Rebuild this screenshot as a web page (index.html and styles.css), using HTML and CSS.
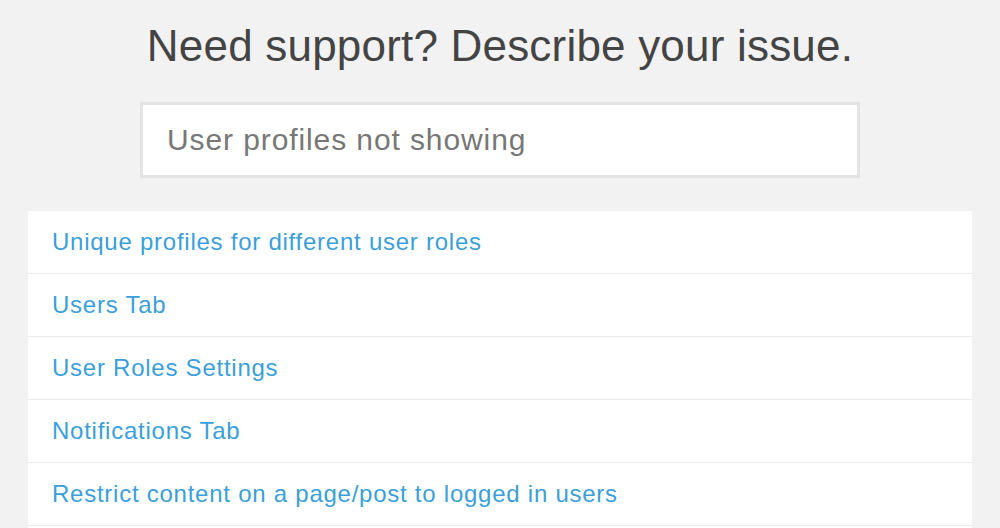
FILE: index.html
```html
<!DOCTYPE html>
<html>
<head>
<meta charset="utf-8">
<link rel="stylesheet" href="styles.css">
</head>
<body>
<div class="page">
  <h1 class="title">Need support? Describe your issue.</h1>
  <div class="search-wrap">
    <div class="search">User profiles not showing</div>
  </div>
  <ul class="results">
    <li class="result"><a href="#">Unique profiles for different user roles</a></li>
    <li class="result"><a href="#">Users Tab</a></li>
    <li class="result"><a href="#">User Roles Settings</a></li>
    <li class="result"><a href="#">Notifications Tab</a></li>
    <li class="result"><a href="#">Restrict content on a page/post to logged in users</a></li>
  </ul>
</div>
</body>
</html>
```

FILE: styles.css
```css
html, body {
  margin: 0;
  padding: 0;
  background: #f2f2f2;
  font-family: "Liberation Sans", Arial, sans-serif;
  overflow: hidden;
  height: 528px;
}
.page {
  width: 1000px;
  display: flex;
  flex-direction: column;
  align-items: center;
}
.title {
  margin: 20px 0 0 0;
  font-size: 44px;
  font-weight: normal;
  color: #444;
  line-height: 52px;
  letter-spacing: 0.2px;
}
.search-wrap {
  margin-top: 30px;
  width: 720px;
}
.search {
  box-sizing: border-box;
  height: 76px;
  border: 3px solid #e4e4e4;
  background: #fff;
  padding: 0 24px;
  font-size: 30px;
  letter-spacing: 0.9px;
  color: #777;
  line-height: 70px;
}
.results {
  list-style: none;
  margin: 33px 0 0 0;
  padding: 0 0 20px 0;
  width: 944px;
  background: #fff;
}
.result {
  height: 62px;
  border-bottom: 1px solid #ebebeb;
  display: flex;
  align-items: center;
  padding: 0 24px;
}
.result a {
  color: #3b9fdb;
  text-decoration: none;
  font-size: 24px;
  letter-spacing: 0.75px;
}
```
